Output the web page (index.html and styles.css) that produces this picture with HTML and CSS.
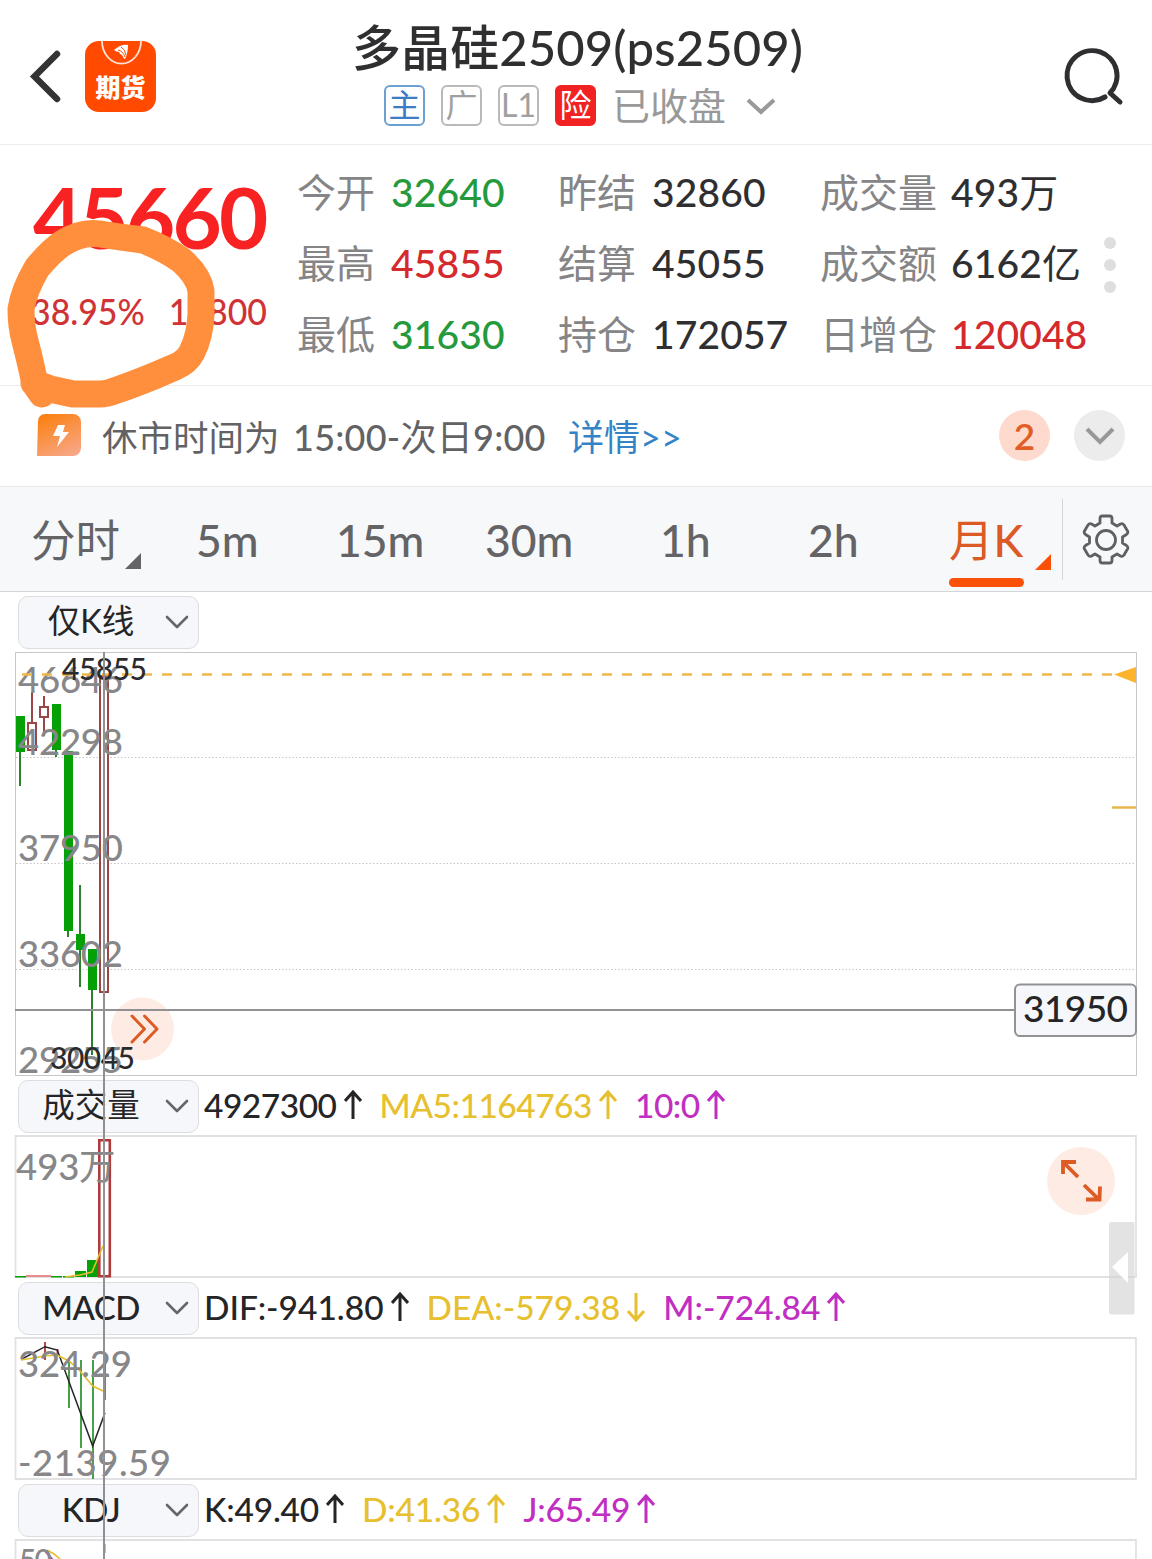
FILE: index.html
```html
<!DOCTYPE html>
<html lang="zh-CN">
<head>
<meta charset="utf-8">
<title>多晶硅2509</title>
<link rel="stylesheet" href="styles.css">
</head>
<body>
<header class="topbar">
  <div class="topbar-left">
    <svg class="back" width="36" height="56" viewBox="0 0 36 56"><path d="M29 6 6.500 28.500 29 51"/></svg>
    <div class="logo">
      <svg width="72" height="28" viewBox="0 0 72 28"><path class="ring" d="M17 0a19 22 0 0 0 39 0"/><path class="wing" d="M29 9q7-6 14-5 0 8-3 14-2-1-3-4-2 0-3-3-3 0-5-2z"/><path class="feather" d="M33 9q5 1 7 7M36 6q4 2 5 8"/></svg>
      <span>期货</span>
    </div>
  </div>
  <div class="heading">
    <h1>多晶硅2509(ps2509)</h1>
    <div class="tags">
      <span class="tag tag-main">主</span><span class="tag">广</span><span class="tag">L1</span><span class="tag tag-risk">险</span>
      <span class="status">已收盘</span>
      <svg width="30" height="18" viewBox="0 0 30 18"><path d="M2 3 15 15 28 3"/></svg>
    </div>
  </div>
  <svg class="search" width="62" height="62" viewBox="0 0 62 62"><path d="M43 50A25 25 0 1 1 48 46L58 55"/></svg>
</header>

<section class="quote">
  <div class="last">
    <div class="price">45660</div>
    <div class="change"><span class="pct">38.95%</span><span>12800</span></div>
  </div>
  <dl class="stats">
    <div><dt>今开</dt><dd class="down">32640</dd></div>
    <div><dt>昨结</dt><dd>32860</dd></div>
    <div><dt>成交量</dt><dd>493<span>万</span></dd></div>
    <div><dt>最高</dt><dd class="up">45855</dd></div>
    <div><dt>结算</dt><dd>45055</dd></div>
    <div><dt>成交额</dt><dd>6162<span>亿</span></dd></div>
    <div><dt>最低</dt><dd class="down">31630</dd></div>
    <div><dt>持仓</dt><dd>172057</dd></div>
    <div><dt>日增仓</dt><dd class="up">120048</dd></div>
  </dl>
  <div class="dots"><i></i><i></i><i></i></div>
  <svg class="marker" width="230" height="200" viewBox="0 215 230 200">
    <path d="M42 394 35 384 32 370Q29 356 25 341 21 326 21 309 24 290 37 268 51 251 63 243 82 231 100 234L120 237 143 240Q164 248 181 260 199 276 201 291L201 315Q200 336 192 352 187 362 175 367L154 376Q132 385 117 390 107 394 100 394L73 394 50 389 34 383"/>
  </svg>
</section>

<section class="notice">
  <svg class="flash" width="46" height="44" viewBox="0 0 46 44">
    <defs><linearGradient id="fl" x1=".2" y1="0" x2=".7" y2="1"><stop offset="0" stop-color="#fb8010"/><stop offset="1" stop-color="#f8a684"/></linearGradient></defs>
    <path fill="url(#fl)" d="M9 1h28a8 8 0 0 1 8 8v26a8 8 0 0 1-8 8H1L2 8a7 7 0 0 1 7-7z"/>
    <path fill="#fff" d="M22 12h7l-2 7h6L21 34l3-11h-7z"/>
  </svg>
  <span class="notice-text">休市时间为</span><span class="notice-time">15:00-<span>次日</span>9:00</span>
  <a class="more">详情&gt;&gt;</a>
  <span class="round count">2</span>
  <span class="round fold"><svg width="30" height="18" viewBox="0 0 30 18"><path d="M2 2 15 15 28 2"/></svg></span>
</section>

<nav class="tabs">
  <span class="tab cjk">分时<i class="corner"></i></span>
  <span class="tab">5m</span>
  <span class="tab">15m</span>
  <span class="tab">30m</span>
  <span class="tab">1h</span>
  <span class="tab">2h</span>
  <span class="tab active"><span class="cjk">月</span>K<i class="corner"></i></span>
  <span class="gear"><svg width="48" height="52" viewBox="-24 -26 48 52">
    <path d="M-6-17V-21.500Q-6-24-3.500-24H3.500Q6-24 6-21.500V-17L11-14 14.500-16Q16.500-17 18-15L21.500-9Q22.500-7 20.500-5.500L16.500-3V3L20.500 5.500Q22.500 7 21.500 9L18 15Q16.500 17 14.500 16L11 14 6 17V20.500Q6 23 3.500 23H-3.500Q-6 23-6 20.500V17L-11 14-14.500 16Q-16.500 17-18 15L-21.500 9Q-22.500 7-20.500 5.500L-16.500 3V-3L-20.500-5.500Q-22.500-7-21.500-9L-18-15Q-16.500-17-14.500-16L-11-14Z"/><circle r="9.500"/></svg></span>
</nav>

<main class="charts">
  <div class="bar">
    <div class="chip"><span class="wide">仅K线</span><svg width="24" height="14" viewBox="0 0 24 14"><path d="M2 2 12 12 22 2"/></svg></div>
  </div>

  <svg class="plot" width="1152" height="424" viewBox="0 652 1152 424">
    <path class="frame dark" d="M15.500 652.500H1136.500V1075.500H15.500Z"/>
    <path class="grid" d="M16 757.500H1136M16 863.500H1136M16 969.500H1136"/>
    <g class="roundbtn"><circle cx="142.500" cy="1029" r="31.500"/><path d="M132 1016 144.500 1029 132 1042M144.500 1016 157 1029 144.500 1042"/></g>
    <g class="wick-g"><path d="M20 752V786M56 750V757M68 931V937M80 885V987M92 990V1055"/></g>
    <g class="fall"><path d="M16 716h9v36h-9zM52 704h9v46h-9zM64 751h9v180h-9zM76 934h9v16h-9zM88 949h9v41h-9z"/></g>
    <g class="rise"><path d="M32 692V722M44 696V706M44 717V736M28 723h8v27h-8zM40 707h8v10h-8zM100 676h8v316h-8z"/></g>
    <g class="axis"><text x="18" y="693" textLength="105">46646</text><text x="18" y="755" textLength="105">42298</text><text x="18" y="861" textLength="105">37950</text><text x="18" y="967" textLength="105">33602</text><text x="18" y="1073" textLength="105">29255</text></g>
    <path class="dash" d="M22 674.500H1113"/>
    <path class="amber" d="M1114 674.500 1136 667V683Z"/>
    <path class="amber-line" d="M1112 807.500H1136"/>
    <g class="peak"><text x="62" y="680" textLength="85">45855</text><text x="50" y="1069" textLength="85">30045</text></g>
    <path class="cross" d="M15 1010H1014"/>
    <rect class="tip" x="1015" y="984.500" width="121" height="51.500" rx="5"/>
    <text class="tip-text" x="1023" y="1022" textLength="105">31950</text>
  </svg>

  <div class="bar">
    <div class="chip"><span class="wide">成交量</span><svg width="24" height="14" viewBox="0 0 24 14"><path d="M2 2 12 12 22 2"/></svg></div>
    <div class="values volume-values">
      <span>4927300<svg class="arr" viewBox="0 0 18 30"><path d="M9 29V2M1 11 9 2 17 11"/></svg></span>
      <span class="y">MA5:1164763<svg class="arr" viewBox="0 0 18 30"><path d="M9 29V2M1 11 9 2 17 11"/></svg></span>
      <span class="m">10:0<svg class="arr" viewBox="0 0 18 30"><path d="M9 29V2M1 11 9 2 17 11"/></svg></span>
    </div>
  </div>

  <svg class="plot" width="1152" height="142" viewBox="0 1136 1152 142">
    <path class="frame" d="M15.500 1136H1136V1277H15.500Z"/>
    <path class="fall" d="M87 1260h11v17h-11zM75 1271h11v6h-11zM63 1276h11v1.500h-11zM15 1276h11v1.500h-11zM51 1276h11v1.500h-11z"/>
    <path class="pinkbar" d="M26 1276H51"/>
    <path class="volbar" d="M99.300 1140.200h10.500v136h-10.500z"/>
    <path class="line-y" d="M65 1277 80 1275 92 1272 103 1246"/>
    <g class="axis"><text x="16" y="1180">493</text><text class="cjk" x="79" y="1180">万</text></g>
    <g class="roundbtn expand"><circle cx="1081" cy="1181" r="34"/><path d="M1078 1177 1063 1162M1063 1174V1162H1076M1084 1185 1099 1199.500M1100 1186.500 1099.500 1199.500H1086"/></g>
    <rect class="handle" x="1109" y="1222" width="25.500" height="92.500" rx="2"/>
    <path class="handle-tri" d="M1112 1267 1128 1252V1283Z"/>
  </svg>

  <div class="bar">
    <div class="chip"><span class="latin">MACD</span><svg width="24" height="14" viewBox="0 0 24 14"><path d="M2 2 12 12 22 2"/></svg></div>
    <div class="values">
      <span>DIF:-941.80<svg class="arr" viewBox="0 0 18 30"><path d="M9 29V2M1 11 9 2 17 11"/></svg></span>
      <span class="y">DEA:-579.38<svg class="arr" viewBox="0 0 18 30"><path d="M9 1V28M1 19 9 28 17 19"/></svg></span>
      <span class="m">M:-724.84<svg class="arr" viewBox="0 0 18 30"><path d="M9 29V2M1 11 9 2 17 11"/></svg></span>
    </div>
  </div>

  <svg class="plot" width="1152" height="142" viewBox="0 1338 1152 142">
    <path class="frame" d="M15.500 1338H1136V1479H15.500Z"/>
    <path class="hist-r" d="M45 1342V1360M57.500 1349V1355"/>
    <path class="hist-g" d="M69 1360V1408M81 1360V1448M93 1360V1479M105 1360V1400"/>
    <path class="line-k" d="M21 1359.500 45 1346.700 57.300 1350 92.700 1446 105 1412.700"/>
    <path class="line-y" d="M21 1360 45 1356 57 1355 69 1361 80 1371 92.700 1386 103 1391"/>
    <g class="axis"><text x="18" y="1377" textLength="114">324.29</text><text x="18" y="1476" textLength="153">-2139.59</text></g>
  </svg>

  <div class="bar">
    <div class="chip"><span class="latin">KDJ</span><svg width="24" height="14" viewBox="0 0 24 14"><path d="M2 2 12 12 22 2"/></svg></div>
    <div class="values kdj-values">
      <span>K:49.40<svg class="arr" viewBox="0 0 18 30"><path d="M9 29V2M1 11 9 2 17 11"/></svg></span>
      <span class="y">D:41.36<svg class="arr" viewBox="0 0 18 30"><path d="M9 29V2M1 11 9 2 17 11"/></svg></span>
      <span class="m">J:65.49<svg class="arr" viewBox="0 0 18 30"><path d="M9 29V2M1 11 9 2 17 11"/></svg></span>
    </div>
  </div>

  <svg class="plot last-plot" width="1152" height="19" viewBox="0 1540 1152 19">
    <path class="frame" d="M15.500 1575V1540H1136V1575"/>
    <path class="line-y" d="M47 1550Q54 1553 60 1559"/>
    <path class="line-m" d="M45 1551 53 1560M104.500 1544V1553"/>
    <g class="axis small"><text x="19" y="1571" textLength="33">50</text></g>
  </svg>
  <div class="crosshair"></div>
</main>
</body>
</html>
```
FILE: styles.css
```css
* { box-sizing: border-box; }
body {
  margin: 0;
  width: 1152px;
  height: 1559px;
  overflow: hidden;
  background: #fff;
  color: #2f2f31;
  font-family: Lato, "Noto Sans CJK SC", sans-serif;
  font-weight: 500;
}
svg { display: block; fill: none; flex: none; }
.cjk { font-weight: 400; }

/* header */
.topbar {
  display: grid;
  grid-template-columns: 340px 1fr 340px;
  height: 145px;
  border-bottom: 1px solid #ececee;
}
.topbar-left { display: flex; align-items: flex-start; padding: 41px 0 0 28px; }
.back { margin-top: 7px; stroke: #333; stroke-width: 6.500; stroke-linecap: round; }
.logo {
  width: 71px; height: 71px; margin-left: 21px;
  border-radius: 14px; background: #ff4a00; overflow: hidden;
  color: #fff; text-align: center;
}
.logo span { display: block; font-size: 25px; font-weight: 900; line-height: 36px; }
.ring { stroke: #ffe3d6; stroke-width: 1.8; }
.wing { fill: #fff; }
.feather { stroke: #ff4a00; stroke-width: 1; }
.heading { display: flex; flex-direction: column; align-items: center; padding: 16px 0 0 3px; }
h1 { margin: 0; font-size: 49px; font-weight: 500; line-height: 62px; letter-spacing: .1px; white-space: nowrap; }
.tags { display: flex; align-items: center; height: 41px; margin: 7px 0 0 5px; gap: 16px; }
.tag {
  width: 41px; height: 41px;
  border: 2px solid #b9b9bb; border-radius: 6px;
  color: #a0a0a2; font-size: 32px; font-weight: 400; line-height: 36px; text-align: center;
}
.tag-main { border-color: #6c9fd2; color: #3c7cc4; }
.tag-risk { border-color: #ef2323; background: #f22222; color: #fff; }
.status { color: #999; font-size: 38px; font-weight: 400; line-height: 41px; }
.tags svg { margin-left: 4px; stroke: #999; stroke-width: 4; }
.search { margin: 47px 0 0 250px; stroke: #2f2f31; stroke-width: 5; stroke-linecap: round; stroke-linejoin: round; }

/* quote */
.quote { position: relative; display: flex; height: 241px; border-bottom: 1px solid #ececee; }
.last { width: 297px; padding: 26px 0 0 33px; color: #d03336; }
.price { color: #f92222; font-size: 85px; font-weight: 700; line-height: 90px; letter-spacing: -2.800px; }
.change {
  display: flex; justify-content: space-between;
  width: 251px; margin: 28px 0 0 -2px;
  font-size: 36px; line-height: 44px;
  transform: scaleX(.94); transform-origin: left;
}
.stats {
  display: grid;
  grid-template-columns: 261px 262px 290px;
  grid-template-rows: repeat(3, 71px);
  margin: 12px 0 0; font-size: 39px; line-height: 71px; white-space: nowrap;
}
.stats div { display: flex; }
.stats dt { width: 94px; color: #858587; font-weight: 400; }
.stats div:nth-child(3n) dt { width: 131px; }
.stats dd { margin: 0; letter-spacing: .1px; }
.stats dd span { font-weight: 400; }
.stats dd.up { color: #d4292d; }
.stats dd.down { color: #259a3c; }
.dots { position: absolute; left: 1104px; top: 92px; display: grid; gap: 10px; }
.dots i { width: 12px; height: 12px; border-radius: 50%; background: #dededf; }
.marker { position: absolute; left: 0; top: 70px; z-index: 2; stroke: #ff8f3c; stroke-width: 27; stroke-linecap: round; stroke-linejoin: round; }

/* notice */
.notice { display: flex; align-items: center; height: 101px; padding: 0 27px 2px 36px; border-bottom: 1px solid #e6e8eb; font-size: 36px; color: #626264; white-space: nowrap; }
.notice-text { width: 191px; margin-left: 20px; font-size: 35.500px; font-weight: 400; }
.notice-time { width: 275px; letter-spacing: .25px; }
.notice-time span { font-weight: 400; }
.more { color: #3483c6; font-weight: 400; }
.round { display: grid; place-items: center; width: 51px; height: 51px; border-radius: 50%; }
.count { margin-left: auto; background: #fddacd; color: #e15f27; font-size: 37px; font-weight: 600; }
.fold { margin-left: 24px; background: #ececed; }
.fold svg { stroke: #98989a; stroke-width: 4; margin-top: 2px; }

/* periods */
.tabs {
  display: grid;
  grid-template-columns: 165px 140px 149px 175px 148px 141px 113px 1fr;
  height: 105px; padding-left: 31px;
  border-bottom: 1px solid #d4d5d8; background: #f6f8fa;
  color: #646466; font-size: 44.500px; line-height: 106px;
}
.tab { position: relative; }
.corner { position: absolute; left: 94px; top: 66px; width: 16px; height: 16px; background: currentColor; clip-path: polygon(100% 0, 100% 100%, 0 100%); }
.active { color: #dc5a26; }
.active .corner { left: 86px; top: 67px; background: #fa5008; }
.active::after { content: ""; position: absolute; left: 0; top: 91px; width: 75px; height: 9px; border-radius: 5px; background: #fa5008; }
.gear { display: flex; align-items: center; height: 81px; margin-top: 12px; padding-left: 19px; border-left: 1px solid #d4d5d8; }
.gear svg { stroke: #606062; stroke-width: 2.800; stroke-linejoin: round; }

/* indicators */
.charts { position: relative; }
.bar { display: flex; align-items: center; height: 60px; padding-left: 18px; }
.chip {
  display: flex; align-items: center; justify-content: space-between;
  width: 181px; height: 53px; padding: 0 9px 0 18px;
  border: 1px solid #dcdde0; border-radius: 10px; background: #f6f7fa;
  color: #252527;
}
.chip span { flex: 1; line-height: 50px; text-align: center; margin: -2px 14px 0 -6px; white-space: nowrap; }
.chip .wide { font-size: 32.500px; font-weight: 400; }
.chip .latin { font-size: 33px; letter-spacing: -.5px; }
.chip svg { stroke: #66666a; stroke-width: 2.600; stroke-linecap: round; stroke-linejoin: round; }
.values { display: flex; gap: 18px; margin: -2px 0 0 5px; color: #252527; font-size: 33.500px; line-height: 52px; white-space: nowrap; }
.volume-values { letter-spacing: -.5px; }
.kdj-values { letter-spacing: -.2px; }
.values span { display: flex; align-items: center; }
.arr { width: 18px; height: 30px; margin-left: 7px; stroke: currentColor; stroke-width: 3; }
.y { color: #e6c02f; }
.m { color: #c02fc2; }

.plot { overflow: visible; }
.frame { stroke: #e1e1e3; stroke-width: 1.800; }
.frame.dark { stroke: #c6c6c8; stroke-width: 1; }
.grid { stroke: #c6c6c8; stroke-dasharray: 1.500 2; }
.wick-g { stroke: #2c8030; stroke-width: 2; }
.fall { fill: #05a005; }
.rise { stroke: #9c4547; stroke-width: 2; }
.axis { fill: #878789; font-size: 36.500px; }
.small { font-size: 30px; }
.peak { fill: #2b2b2d; font-size: 30px; }
.dash { stroke: #efb649; stroke-width: 2.500; stroke-dasharray: 10 10; }
.amber { fill: #fbb42b; }
.amber-line { stroke: #e8b54c; stroke-width: 2.500; }
.cross { stroke: #919193; stroke-width: 2; }
.tip { fill: #f6f7fa; stroke: #929294; stroke-width: 2; }
.tip-text { fill: #252527; font-size: 37px; }
.roundbtn circle { fill: #feebe4; }
.roundbtn path { stroke: #dd5b25; stroke-width: 3; stroke-linecap: round; stroke-linejoin: round; }
.roundbtn.expand path { stroke-width: 3.800; stroke-linecap: butt; stroke-linejoin: miter; }
.pinkbar { stroke: #e88b8b; stroke-width: 2; }
.volbar { stroke: #b13b3c; stroke-width: 2.600; }
.line-y { stroke: #e5bd2c; stroke-width: 1.600; }
.line-k { stroke: #252527; stroke-width: 1.500; }
.line-m { stroke: #b44fc0; stroke-width: 2; }
.hist-r { stroke: #bd4848; stroke-width: 2; }
.hist-g { stroke: #45a248; stroke-width: 2; }
.handle { fill: #d2d2d2; fill-opacity: .62; }
.handle-tri { fill: #fff; }
.crosshair { position: absolute; left: 103px; top: 60px; width: 2px; height: 907px; background: #919193; }
```
